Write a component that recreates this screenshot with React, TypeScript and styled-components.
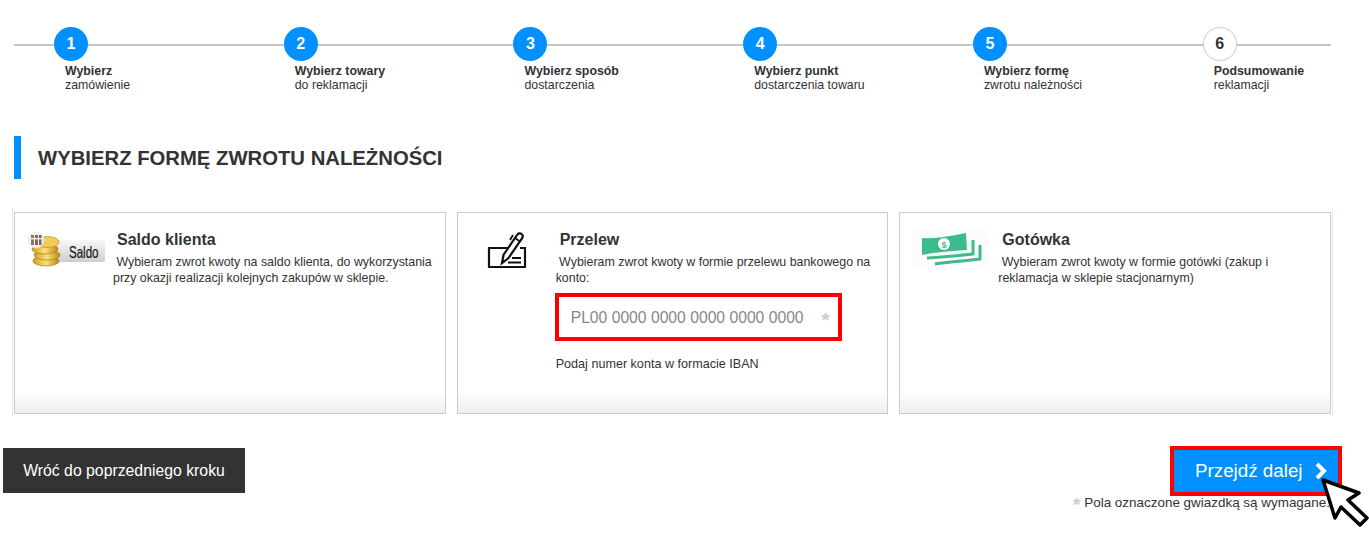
import React from 'react';
import styled, { createGlobalStyle } from 'styled-components';

const GlobalStyle = createGlobalStyle`
  html, body {
    margin: 0;
    padding: 0;
    background: #fff;
  }

  body {
    font-family: "Liberation Sans", Arial, sans-serif;
    color: #333;
  }
`;

const steps = [
  { n: 1, title: 'Wybierz', sub: 'zamówienie' },
  { n: 2, title: 'Wybierz towary', sub: 'do reklamacji' },
  { n: 3, title: 'Wybierz sposób', sub: 'dostarczenia' },
  { n: 4, title: 'Wybierz punkt', sub: 'dostarczenia towaru' },
  { n: 5, title: 'Wybierz formę', sub: 'zwrotu należności' },
  { n: 6, title: 'Podsumowanie', sub: 'reklamacji', idle: true },
];

const SaldoIcon = () => (
  <svg width="78" height="36" viewBox="0 0 78 36">
    <defs>
      <linearGradient id="label" x1="0" y1="0" x2="0" y2="1">
        <stop offset="0" stopColor="#f8f8f8" />
        <stop offset="1" stopColor="#cdcdcd" />
      </linearGradient>
      <linearGradient id="gold" x1="0" y1="0" x2="1" y2="0">
        <stop offset="0" stopColor="#d29c1c" />
        <stop offset="0.5" stopColor="#fbe27a" />
        <stop offset="1" stopColor="#bd8616" />
      </linearGradient>
    </defs>
    <rect x="28" y="8" width="49" height="22" rx="2" fill="url(#label)" />
    <text transform="translate(41 26) scale(0.72 1)" fontFamily="Liberation Sans, sans-serif" fontSize="16" fill="#1c1c1c" stroke="#1c1c1c" strokeWidth="0.25">Saldo</text>
    <ellipse cx="18" cy="29" rx="13" ry="5" fill="url(#gold)" stroke="#a87a12" strokeWidth="0.7" />
    <ellipse cx="19" cy="23" rx="13" ry="5" fill="url(#gold)" stroke="#a87a12" strokeWidth="0.7" />
    <ellipse cx="17" cy="17" rx="13" ry="5" fill="url(#gold)" stroke="#a87a12" strokeWidth="0.7" />
    <ellipse cx="19" cy="10" rx="12" ry="5.5" fill="#f2cd55" stroke="#c2951e" strokeWidth="0.7" />
    <circle cx="8" cy="8" r="8" fill="#f4f4f4" stroke="#ddd" strokeWidth="0.6" />
    <rect x="3" y="3" width="3" height="10" fill="#6b8a5c" />
    <rect x="7" y="3" width="3" height="10" fill="#a8574a" />
    <rect x="11" y="3" width="2.5" height="10" fill="#55705f" />
    <rect x="2" y="6" width="12" height="1.4" fill="#eee" />
  </svg>
);

const CheckIcon = () => (
  <svg width="42" height="42" viewBox="0 0 42 42" fill="none" stroke="#111">
    <path d="M23 18H3v19h36V18h-5" strokeWidth="2.2" />
    <path d="M16 33l1.5-8L31 5c1-1.6 3-2.2 4.4-1.2s1.6 3 .6 4.5L22.5 28z" fill="#fff" strokeWidth="2.2" />
    <path d="M29 8l5 3.4M27 5l-3 5" strokeWidth="1.8" />
    <path d="M26 28h9M22 32.5h13" strokeWidth="2" />
  </svg>
);

const CashIcon = () => (
  <svg width="78" height="40" viewBox="0 0 78 40">
    <rect width="78" height="40" fill="#fcfcfc" />
    <path d="M10 8C25 9 38 6 54 3l1 17C40 21 25 22 10 25z" fill="#3dbb8b" />
    <circle cx="32" cy="14" r="6" fill="#fff" />
    <text x="32" y="17.5" textAnchor="middle" fontFamily="Liberation Sans, sans-serif" fontSize="9" fontWeight="700" fill="#3dbb8b">$</text>
    <path d="M15 28c15-1 30-2 46-4V10" fill="none" stroke="#3dbb8b" strokeWidth="3" />
    <path d="M23 34c15-2 29-3 45-5V15" fill="none" stroke="#3dbb8b" strokeWidth="3" />
  </svg>
);

const Chevron = () => (
  <svg width="14" height="18" viewBox="0 0 14 18" fill="none">
    <path d="M3 2l7 7-7 7" stroke="#fff" strokeWidth="4" />
  </svg>
);

const Pointer = () => (
  <svg width="49" height="52" viewBox="0 0 49 52">
    <path d="M3 3l12 38 6-11 19 18 7-7-19-18 11-7z" fill="#fff" stroke="#000" strokeWidth="3.5" strokeLinejoin="round" />
  </svg>
);

export default function App() {
  return (
    <Page>
      <GlobalStyle />
      <Stepper>
        {steps.map((s) => (
          <Step key={s.n}>
            <StepCircle $idle={s.idle}>{s.n}</StepCircle>
            <StepTitle>{s.title}</StepTitle>
            <StepSub>{s.sub}</StepSub>
          </Step>
        ))}
      </Stepper>

      <Heading>Wybierz formę zwrotu należności</Heading>

      <Cards>
        <Card>
          <CardIcon $left={13} $top={19}><SaldoIcon /></CardIcon>
          <CardBody>
            <CardTitle>Saldo klienta</CardTitle>
            <CardText>&nbsp;Wybieram zwrot kwoty na saldo klienta, do wykorzystania przy okazji realizacji kolejnych zakupów w sklepie.</CardText>
          </CardBody>
        </Card>
        <Card>
          <CardIcon $left={28} $top={17}><CheckIcon /></CardIcon>
          <CardBody>
            <CardTitle>Przelew</CardTitle>
            <CardText>&nbsp;Wybieram zwrot kwoty w formie przelewu bankowego na konto:</CardText>
            <IbanField>
              <IbanInput placeholder="PL00 0000 0000 0000 0000 0000" />
              <Star>*</Star>
            </IbanField>
            <Hint>Podaj numer konta w formacie IBAN</Hint>
          </CardBody>
        </Card>
        <Card>
          <CardIcon $left={12} $top={17}><CashIcon /></CardIcon>
          <CardBody>
            <CardTitle>Gotówka</CardTitle>
            <CardText>&nbsp;Wybieram zwrot kwoty w formie gotówki (zakup i reklamacja w sklepie stacjonarnym)</CardText>
          </CardBody>
        </Card>
      </Cards>

      <Footer>
        <BackButton>Wróć do poprzedniego kroku</BackButton>
        <NextColumn>
          <NextButton>
            Przejdź dalej
            <Chevron />
          </NextButton>
          <Note><NoteStar>*</NoteStar> Pola oznaczone gwiazdką są wymagane.</Note>
        </NextColumn>
      </Footer>

      <PointerSpot><Pointer /></PointerSpot>
    </Page>
  );
}

const Page = styled.div`
  position: relative;
  width: 1369px;
  height: 546px;
  overflow: hidden;
  padding-top: 27px;
  box-sizing: border-box;
`;

const Stepper = styled.div`
  display: flex;
  margin: 0 38px 0 14px;
  background: linear-gradient(#c2c7c7, #c2c7c7) no-repeat 0 17px / 100% 2px;
`;

const Step = styled.div`
  width: 229.74px;
  padding-left: 40px;
  box-sizing: border-box;
  font-size: 12.35px;
  line-height: 14px;

  &:last-child {
    width: auto;
  }
`;

const StepCircle = styled.div<{ $idle?: boolean }>`
  width: 34px;
  height: 34px;
  border-radius: 50%;
  box-sizing: border-box;
  display: flex;
  align-items: center;
  justify-content: center;
  font-size: 16px;
  font-weight: 700;
  margin-bottom: 3px;
  background: ${(p) => (p.$idle ? '#fff' : '#0090ff')};
  color: ${(p) => (p.$idle ? '#333' : '#fff')};
  border: ${(p) => (p.$idle ? '1px solid #ccc' : 'none')};
`;

const StepTitle = styled.div`
  margin-left: 11px;
  font-weight: 700;
  white-space: nowrap;
`;

const StepSub = styled.div`
  margin-left: 11px;
  white-space: nowrap;
`;

const Heading = styled.h1`
  margin: 44px 0 30px 14px;
  height: 43px;
  padding: 1px 0 0 17px;
  box-sizing: border-box;
  border-left: 7px solid #0090ff;
  display: flex;
  align-items: center;
  font-size: 20.3px;
  font-weight: 700;
  text-transform: uppercase;
  color: #333;
`;

const Cards = styled.div`
  display: flex;
  gap: 11px;
  margin: 0 36px 0 12px;
  padding: 3px 1px 2px;
  border-left: 1px solid #d8ecfb;
  border-right: 1px solid #d8ecfb;
`;

const Card = styled.div`
  position: relative;
  flex: 1;
  height: 202px;
  box-sizing: border-box;
  display: flex;
  padding: 18px 0 0 98px;
  border: 1px solid #ccc;
  background: linear-gradient(#fff 178px, #eee 100%);
`;

const CardIcon = styled.div<{ $left: number; $top: number }>`
  position: absolute;
  left: ${(p) => p.$left}px;
  top: ${(p) => p.$top}px;
  line-height: 0;
`;

const CardBody = styled.div`
  width: 322px;
`;

const CardTitle = styled.div`
  padding-left: 4px;
  font-size: 16px;
  font-weight: 700;
  line-height: 18px;
  margin-bottom: 5px;
`;

const CardText = styled.p`
  margin: 0;
  font-size: 12.4px;
  line-height: 16px;
`;

const IbanField = styled.div`
  display: flex;
  align-items: center;
  width: 287px;
  height: 48px;
  margin: 7px 0 0 -1px;
  padding: 0 8px 0 12px;
  box-sizing: border-box;
  border: 4px solid #f00;
`;

const IbanInput = styled.input`
  flex: 1;
  min-width: 0;
  border: 0;
  outline: 0;
  padding: 2px 0 0;
  background: none;
  font: 15.7px "Liberation Sans", Arial, sans-serif;

  &::placeholder {
    color: #888;
    opacity: 1;
  }
`;

const Star = styled.span`
  padding-top: 5px;
  font-size: 21px;
  line-height: 21px;
  color: #ccc;
  font-weight: 700;
`;

const Hint = styled.p`
  margin: 15px 0 0;
  font-size: 12.6px;
  line-height: 16px;
`;

const Footer = styled.div`
  display: flex;
  justify-content: space-between;
  align-items: flex-start;
  margin: 30px 27px 0 3px;
`;

const BackButton = styled.button`
  width: 242px;
  height: 45px;
  margin-top: 2px;
  border: 0;
  background: #333;
  color: #fff;
  font: 15.8px "Liberation Sans", Arial, sans-serif;
`;

const NextColumn = styled.div`
  display: flex;
  flex-direction: column;
  align-items: flex-end;
`;

const NextButton = styled.button`
  display: flex;
  align-items: center;
  gap: 11px;
  width: 172px;
  height: 50px;
  padding: 0 0 0 21px;
  box-sizing: border-box;
  border: 4px solid #f00;
  background: #0090ff;
  color: #fff;
  font: 18.8px "Liberation Sans", Arial, sans-serif;
`;

const Note = styled.div`
  margin: -1px 12px 0 0;
  font-size: 13.45px;
  line-height: 16px;
`;

const NoteStar = styled.span`
  color: #ccc;
  font-weight: 700;
  font-size: 19px;
  line-height: 0;
  vertical-align: -4px;
`;

const PointerSpot = styled.div`
  position: absolute;
  left: 1320px;
  top: 477px;
  line-height: 0;
`;
